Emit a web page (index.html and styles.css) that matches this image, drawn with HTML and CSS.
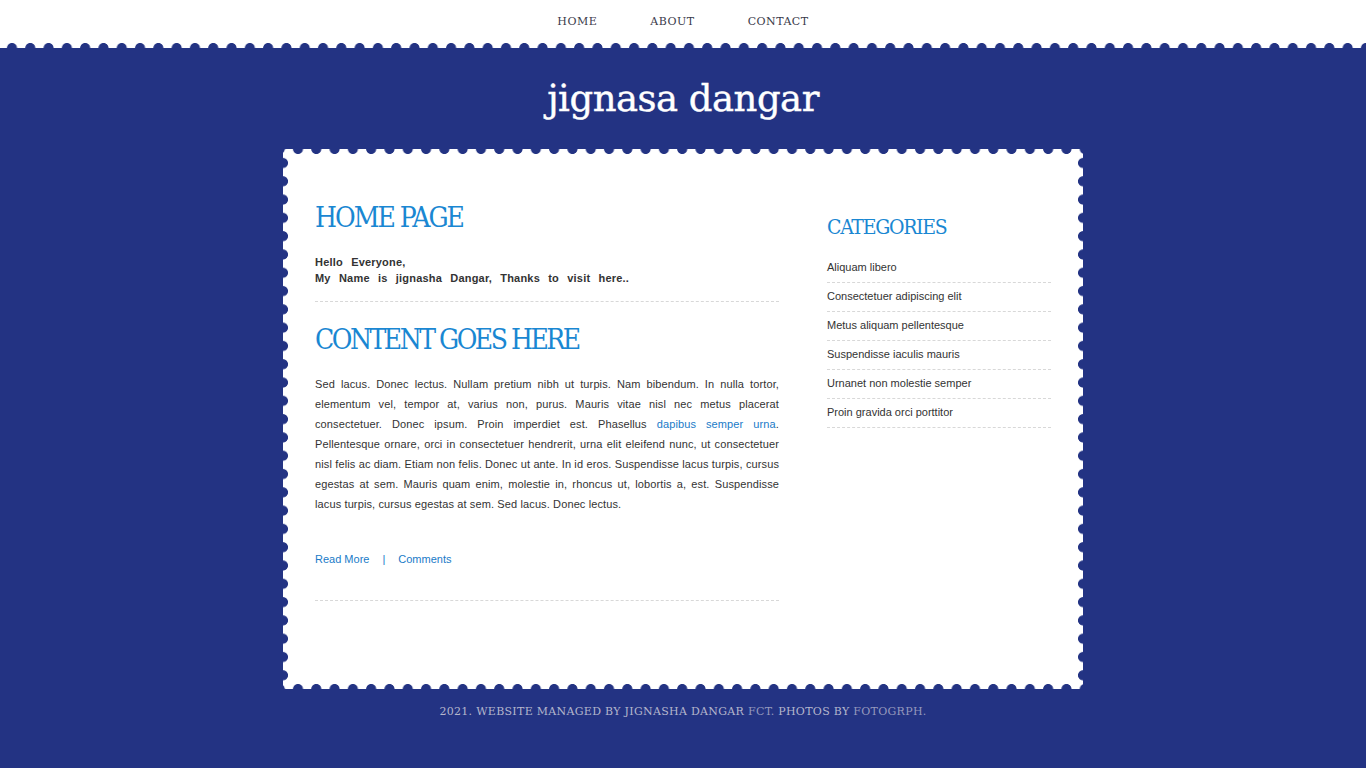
FILE: index.html
```html
<!DOCTYPE html>
<html lang="en">
<head>
<meta charset="utf-8">
<title>jignasa dangar</title>
<link rel="stylesheet" href="styles.css">
</head>
<body>
<header class="topbar">
  <nav class="menu">
    <a href="#">HOME</a>
    <a href="#">ABOUT</a>
    <a href="#">CONTACT</a>
  </nav>
</header>
<div class="site">
  <h1 class="logo">jignasa dangar</h1>
  <div class="card">
    <main class="content">
      <h2 class="title">HOME PAGE</h2>
      <p class="intro">Hello Everyone,<br>My Name is jignasha Dangar, Thanks to visit here..</p>
      <hr class="dash">
      <h2 class="title title-2">CONTENT GOES HERE</h2>
      <p class="body-text">Sed lacus. Donec lectus. Nullam pretium nibh ut turpis. Nam bibendum. In nulla tortor, elementum vel, tempor at, varius non, purus. Mauris vitae nisl nec metus placerat consectetuer. Donec ipsum. Proin imperdiet est. Phasellus <a href="#">dapibus semper urna</a>. Pellentesque ornare, orci in consectetuer hendrerit, urna elit eleifend nunc, ut consectetuer nisl felis ac diam. Etiam non felis. Donec ut ante. In id eros. Suspendisse lacus turpis, cursus egestas at sem. Mauris quam enim, molestie in, rhoncus ut, lobortis a, est. Suspendisse lacus turpis, cursus egestas at sem. Sed lacus. Donec lectus.</p>
      <p class="meta"><a href="#">Read More</a><span class="sep">|</span><a href="#">Comments</a></p>
      <hr class="dash dash-end">
    </main>
    <aside class="sidebar">
      <h3 class="side-title">CATEGORIES</h3>
      <ul class="cats">
        <li>Aliquam libero</li>
        <li>Consectetuer adipiscing elit</li>
        <li>Metus aliquam pellentesque</li>
        <li>Suspendisse iaculis mauris</li>
        <li>Urnanet non molestie semper</li>
        <li>Proin gravida orci porttitor</li>
      </ul>
    </aside>
  </div>
  <footer class="foot">2021. WEBSITE MANAGED BY JIGNASHA DANGAR <a href="#">FCT.</a> PHOTOS BY <a href="#">FOTOGRPH.</a></footer>
</div>
</body>
</html>
```

FILE: styles.css
```css
html, body {
  margin: 0;
  padding: 0;
}
body {
  background: #233383;
  font-family: "Liberation Sans", Arial, sans-serif;
  height: 768px;
  overflow: hidden;
}
.topbar {
  height: 48px;
  background:
    radial-gradient(circle at 9px 5px, #233383 4.6px, rgba(35,51,131,0) 5.4px) 3px calc(100% + 5px) / 18.3px 10px repeat-x,
    #ffffff;
}
.menu {
  display: flex;
  justify-content: center;
  gap: 53px;
  padding-top: 15px;
  padding-left: 0;
}
.menu a {
  font-family: "DejaVu Serif", serif;
  font-size: 11px;
  letter-spacing: 0.5px;
  color: #3a3a4a;
  text-decoration: none;
  line-height: 14px;
}
.site {
  display: flex;
  flex-direction: column;
  align-items: center;
}
.logo {
  margin: 0;
  height: 101px;
  box-sizing: border-box;
  padding-top: 26px;
  font-family: "DejaVu Serif", serif;
  font-weight: normal;
  font-size: 37px;
  line-height: 50px;
  letter-spacing: -0.5px;
  color: #ffffff;
  -webkit-text-stroke: 0.4px #ffffff;
}
.card {
  width: 800px;
  height: 540px;
  box-sizing: border-box;
  padding: 51px 32px 0 32px;
  display: flex;
  justify-content: space-between;
  background:
    radial-gradient(circle at 9px 5px, #233383 4.6px, rgba(35,51,131,0) 5.4px) 6px -5px / 18.3px 10px repeat-x,
    radial-gradient(circle at 9px 5px, #233383 4.6px, rgba(35,51,131,0) 5.4px) 6px calc(100% + 5px) / 18.3px 10px repeat-x,
    radial-gradient(circle at 5px 9px, #233383 4.6px, rgba(35,51,131,0) 5.4px) -5px 5px / 10px 18.3px repeat-y,
    radial-gradient(circle at 5px 9px, #233383 4.6px, rgba(35,51,131,0) 5.4px) calc(100% + 5px) 5px / 10px 18.3px repeat-y,
    #ffffff;
}
.content {
  width: 464px;
}
.title {
  margin: 0;
  font-family: "DejaVu Serif", serif;
  font-stretch: condensed;
  font-weight: normal;
  font-size: 28px;
  line-height: 36px;
  letter-spacing: -2px;
  color: #1a87d2;
}
.title-2 {
  margin-top: 20px;
  letter-spacing: -2.5px;
}
.intro {
  margin: 18px 0 0;
  font-size: 11px;
  font-weight: bold;
  line-height: 16px;
  word-spacing: 5px;
  letter-spacing: 0.2px;
  color: #333333;
}
.dash {
  border: 0;
  border-top: 1px dashed #d8d8d8;
  margin: 15px 0 0;
  height: 0;
}
.body-text {
  margin: 16px 0 0;
  font-size: 11px;
  line-height: 20px;
  letter-spacing: 0.12px;
  text-align: justify;
  color: #333333;
}
.body-text a {
  color: #1a7bc8;
  text-decoration: none;
}
.meta {
  margin: 35px 0 0;
  font-size: 11px;
  line-height: 20px;
}
.meta a {
  color: #1a7bc8;
  text-decoration: none;
}
.sep {
  color: #1a7bc8;
  margin: 0 13px;
}
.dash-end {
  margin-top: 31px;
}
.sidebar {
  width: 224px;
  padding-top: 14px;
}
.side-title {
  margin: 0;
  font-family: "DejaVu Serif", serif;
  font-stretch: condensed;
  font-weight: normal;
  font-size: 21px;
  line-height: 26px;
  letter-spacing: -1.3px;
  color: #1a87d2;
}
.cats {
  list-style: none;
  margin: 14px 0 0;
  padding: 0;
}
.cats li {
  font-size: 11px;
  line-height: 15px;
  padding: 6px 0 7px;
  border-bottom: 1px dashed #d8d8d8;
  color: #333333;
}
.foot {
  padding-top: 16px;
  font-family: "DejaVu Serif", serif;
  font-size: 11px;
  letter-spacing: 0.3px;
  color: #b4b6cc;
}
.foot a {
  color: #9599bd;
  text-decoration: none;
}
```
